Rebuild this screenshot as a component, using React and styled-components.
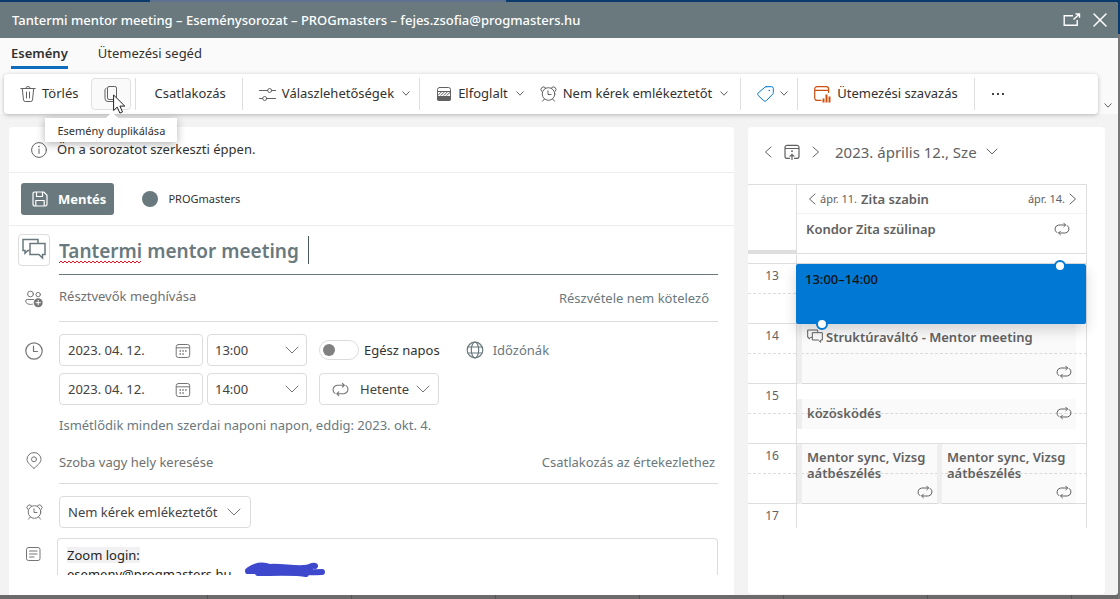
import React from "react";
import styled, { createGlobalStyle, css } from "styled-components";

const GlobalStyle = createGlobalStyle`
  *, *::before, *::after { box-sizing: border-box; }
  body {
    margin: 0;
    font-family: "Noto Sans", "Open Sans", sans-serif;
    font-size: 13px;
    line-height: 20px;
    color: #323130;
  }
  button, input, select, textarea { font: inherit; color: inherit; }
  button { cursor: pointer; }
  svg { display: block; flex: none; }
`;

/* ---------- icons ---------- */

const Icon = ({ w = 16, h = w, sw = 1, children, ...rest }) => (
  <svg
    width={w}
    height={h}
    viewBox={`0 0 ${w} ${h}`}
    fill="none"
    stroke="currentColor"
    strokeWidth={sw}
    strokeLinecap="round"
    strokeLinejoin="round"
    aria-hidden="true"
    {...rest}
  >
    {children}
  </svg>
);

const TrashIcon = () => (
  <Icon>
    <path d="M.8 2.5h14.4M5.8 2.5a2.2 2 0 0 1 4.4 0M2.3 2.8l1.2 11.1a1.8 1.8 0 0 0 1.8 1.6h5.4a1.8 1.8 0 0 0 1.8-1.6l1.2-11.1M6.5 6v6M9.5 6v6" />
  </Icon>
);
const CopyIcon = () => (
  <Icon>
    <rect x="4.5" y=".5" width="9" height="13" rx="1.6" />
    <path d="M3.2 2.2c-1 .3-1.2 1-1.2 1.8v8.5a3 3 0 0 0 3 3h5c.9 0 1.6-.3 1.9-1.2" />
  </Icon>
);
const SlidersIcon = () => (
  <Icon w={17} h={16}>
    <path d="M.5 4.5h8M13 4.5h3.5M.5 12.5h3M8 12.5h8.5" />
    <circle cx="10.7" cy="4.5" r="2" />
    <circle cx="5.7" cy="12.5" r="2" />
  </Icon>
);
const BusyIcon = () => (
  <Icon>
    <rect x="1.5" y="1.5" width="13" height="13" rx="2" />
    <path d="M1 10h14v3a2 2 0 0 1-2 2H3a2 2 0 0 1-2-2z" fill="currentColor" stroke="none" />
    <path d="M1.5 5.5h13M2 9.3l3-3M5 9.3l3-3M8 9.3l3-3M11 9.3l3-3" />
  </Icon>
);
const AlarmIcon = () => (
  <Icon w={17} h={16}>
    <circle cx="8.5" cy="8" r="6.3" />
    <path d="M8 4.8v3.7h3M4.2 13.2l-1.7 2M12.8 13.2l1.7 2M1.6 5.3A2.6 2.6 0 1 1 5.6 1.8M15.4 5.3a2.6 2.6 0 1 0-4-3.5" />
  </Icon>
);
const TagIcon = () => (
  <Icon w={17} h={16} stroke="#0078d4">
    <path d="M9.2.7h5.3a1.8 1.8 0 0 1 1.8 1.8v4.2c0 .6-.2 1-.6 1.4l-6.4 6.6a1.8 1.8 0 0 1-2.6 0L1.2 9.5a1.8 1.8 0 0 1 0-2.6L7.9 1.2C8.3.9 8.7.7 9.2.7z" />
    <circle cx="12.3" cy="4.5" r=".8" fill="#0078d4" stroke="none" />
  </Icon>
);
const PollIcon = () => (
  <Icon w={17} h={17} sw={1.2} stroke="#ca5010">
    <path d="M7 14.4H3A2.3 2.3 0 0 1 .7 12.1V3A2.3 2.3 0 0 1 3 .7h9.3A2.3 2.3 0 0 1 14.6 3v3.5M.7 4.4h13.9" />
    <path d="M9.5 12.5v4M12.5 8.5v8M15.5 10.5v6" strokeWidth="2" strokeLinecap="butt" />
  </Icon>
);
const chevrons = {
  8: "M.8 .8L4 4.2 7.2 .8",
  12: "M1 1l5 5 5-5",
  14: "M1 1l6 6 6-6",
};
const ChevronDown = ({ w = 8 }) => (
  <Icon w={w} h={w > 10 ? 8 : 6}>
    <path d={chevrons[w]} />
  </Icon>
);
const ChevronLeft = () => (
  <Icon w={8} h={12}>
    <path d="M7 1L1.5 6 7 11" />
  </Icon>
);
const ChevronRight = () => (
  <Icon w={8} h={12}>
    <path d="M1 1l5.5 5L1 11" />
  </Icon>
);
const PopOutIcon = () => (
  <Icon w={18} h={14} sw={1.4}>
    <path d="M10 2.7H1.2v9.6h13V7M10.5 6.5L16 1.5M12.5 1h4v3.8" strokeLinejoin="miter" strokeLinecap="butt" />
  </Icon>
);
const CloseIcon = () => (
  <Icon w={14} h={14} sw={1.5}>
    <path d="M1 1l12 12M13 1L1 13" />
  </Icon>
);
const InfoIcon = () => (
  <Icon>
    <circle cx="8" cy="8" r="7.4" />
    <path d="M8 7v4.5" />
    <circle cx="8" cy="4.6" r=".8" fill="currentColor" stroke="none" />
  </Icon>
);
const SaveIcon = () => (
  <Icon sw={1.2}>
    <path d="M2.7 1h9l3.3 3.2v9.1a1.7 1.7 0 0 1-1.7 1.7H2.7A1.7 1.7 0 0 1 1 13.3V2.7A1.7 1.7 0 0 1 2.7 1zM4.5 1v4.5h6V1M3.8 15V9.5h8.4V15" />
  </Icon>
);
const ChatsIcon = ({ size = 24, sw = 1.5 }) => (
  <svg
    width={size}
    height={size}
    viewBox="0 0 24 24"
    fill="none"
    stroke="currentColor"
    strokeWidth={sw}
    aria-hidden="true"
  >
    <path d="M7.5 12.5H5.8L3 15.2v-2.7H1V1.5h15V5" />
    <path d="M8 5.5h15v11h-2.5v3.5l-3.6-3.5H8z" />
  </svg>
);
const PeopleIcon = () => (
  <Icon w={18} h={18}>
    <circle cx="5.5" cy="4" r="2.9" />
    <circle cx="13.2" cy="4.6" r="2.2" />
    <path d="M8.5 9.5H2.3A1.6 1.6 0 0 0 .7 11.1c0 2.2 2.5 3.3 4.8 3.3.7 0 1.4 0 2-.2" />
    <circle cx="13.2" cy="12.7" r="4.5" fill="currentColor" stroke="none" />
    <path d="M13.2 10.5v4.4M11 12.7h4.4" stroke="#fff" />
  </Icon>
);
const ClockIcon = () => (
  <Icon w={18} h={18} sw={1.2}>
    <circle cx="9" cy="9" r="8.2" />
    <path d="M8.5 4v5.5h4" />
  </Icon>
);
const PinIcon = () => (
  <Icon w={16} h={17}>
    <path d="M8 16.3C6 14.6 1 11 1 7.3a7 6.700 0 0 1 14 0C15 11 10 14.6 8 16.3z" />
    <circle cx="8" cy="7.3" r="2.5" />
  </Icon>
);
const NoteIcon = () => (
  <Icon>
    <rect x="1.5" y="1.5" width="13.5" height="13" rx="2" />
    <path d="M4.5 5h7.5M4.5 8h7.5M4.5 11h4.5" />
  </Icon>
);
const CalendarIcon = () => (
  <Icon>
    <rect x="1.2" y="1.5" width="13.5" height="13" rx="2.2" />
    <path d="M1.5 4.8h13" />
    <path d="M4.5 8h1.5M7.3 8h1.5M10.1 8h1.5M4.5 11h1.5M7.3 11h1.5" strokeWidth="1.6" strokeLinecap="butt" />
  </Icon>
);
const TodayIcon = () => (
  <Icon w={16} h={16} sw={1.2}>
    <path d="M5.5 14.4H3.2A2.2 2.2 0 0 1 1 12.2V3.5a2.2 2.2 0 0 1 2.2-2.2h9.6A2.2 2.2 0 0 1 15 3.5v8.7a2.2 2.2 0 0 1-2.2 2.2h-2.3M1 4.5h14M8 15.6V10M6 12.200L8 10.800l2 1.400" />
    <circle cx="8" cy="7.2" r=".9" fill="currentColor" stroke="none" />
  </Icon>
);
const RepeatIcon = ({ w = 16 }) => (
  <svg
    width={w}
    height={w}
    viewBox="0 0 16 16"
    fill="none"
    stroke="currentColor"
    strokeLinecap="round"
    strokeLinejoin="round"
    aria-hidden="true"
  >
    <path d="M2.8 11.6A4.2 4.2 0 0 1 4.7 4h6.8M9.8 2.2L11.600 4 9.8 5.8M13.2 4.4A4.2 4.2 0 0 1 11.3 12H4.7M6.4 10.2L4.6 12l1.800 1.800" />
  </svg>
);
const GlobeIcon = () => (
  <Icon w={18} h={18} sw={1.2}>
    <circle cx="9" cy="9" r="7.8" />
    <ellipse cx="9" cy="9" rx="3.7" ry="7.8" />
    <path d="M2 6h14M2 12h14" />
  </Icon>
);

/* ---------- window ---------- */

const Backdrop = styled.div`
  display: flex;
  flex-direction: column;
  height: 100vh;
  min-height: 580px;
  padding: 2px 2px 0 0;
  background:
    linear-gradient(#5f7290, #5f7290) 150px 0 / 356px 2px no-repeat,
    linear-gradient(#0a3a6b, #0a3a6b) 0 0 / 100% 34px no-repeat,
    #777;
`;
const Window = styled.div`
  display: flex;
  flex: 1;
  flex-direction: column;
  min-height: 0;
  border-radius: 0 3px 3px 0;
  overflow: hidden;
  background: #f3f3f3;
`;
const PageBehind = styled.div`
  height: 4px;
  background: repeating-linear-gradient(90deg, #6c6a6a 0 143px, #565454 143px 144px);
  background-position: 64px 0;
`;
const TitleBar = styled.header`
  display: flex;
  align-items: center;
  height: 36px;
  padding: 0 11px 0 12px;
  background: #69797e;
  color: #fff;
`;
const TitleText = styled.h1`
  flex: 1;
  margin: 0;
  font-size: 13px;
  font-weight: 500;
`;
const TitleButton = styled.button`
  display: flex;
  padding: 0;
  margin-left: 12px;
  border: 0;
  background: none;
`;
const Ribbon = styled.div`
  display: grid;
  grid-template-columns: 1fr 20px;
  background: #fafafa;
`;
const Tabs = styled.nav`
  display: flex;
  grid-column: 1 / -1;
  gap: 30px;
  height: 36px;
  padding: 5px 11px 0;
`;
const Tab = styled.a`
  height: 26px;
  color: #323130;
  text-decoration: none;
  ${(p) =>
    p.$active &&
    css`
      font-weight: 600;
      border-bottom: 3px solid #0f6cbd;
    `}
`;
const Toolbar = styled.div`
  display: flex;
  height: 40px;
  margin-left: 4px;
  padding: 4px 0 4px 4px;
  border-radius: 4px;
  background: #fff;
  box-shadow: 0 1px 4px rgba(0, 0, 0, 0.26);
  position: relative;
  z-index: 2;
`;
const ToolGroup = styled.div`
  display: flex;
  align-items: center;
  padding: 0 ${(p) => p.$end ?? 0}px 0 ${(p) => p.$start ?? 0}px;
  border-right: 1px solid #dedede;
  &:last-child { border-right: 0; }
`;
const ToolButton = styled.button`
  display: flex;
  align-items: center;
  gap: 6px;
  height: 32px;
  padding: 0 8px;
  border: 0;
  border-radius: 4px;
  background: none;
  color: #616161;
  white-space: nowrap;
`;
const ToolLabel = styled.span`
  padding: 0 ${(p) => (p.$menu ? 2 : 0)}px 2px 0;
  color: #323130;
`;
const HoveredTool = styled.div`
  position: relative;
  margin: 0 4px 0 5px;
  color: #616161;
`;
const HoveredButton = styled(ToolButton)`
  width: 40px;
  justify-content: center;
  border: 1px solid #e0e0e0;
  background: #fafafa;
`;
const Tooltip = styled.div`
  position: absolute;
  top: 40px;
  left: -46px;
  padding: 3px 12px 1px;
  background: #fff;
  box-shadow: 0 2px 8px rgba(0, 0, 0, 0.3);
  color: #323130;
  font-size: 11px;
  white-space: nowrap;
  &::before {
    content: "";
    position: absolute;
    top: -6px;
    left: 60px;
    border: 7px solid transparent;
    border-top-width: 0;
    border-bottom-color: #fff;
  }
`;
const Pointer = styled.svg`
  position: absolute;
  top: 16px;
  left: 22px;
`;
const CollapseButton = styled.button`
  display: flex;
  align-items: flex-end;
  justify-content: center;
  padding: 0 0 5px;
  border: 0;
  background: none;
  color: #616161;
`;
const Body = styled.main`
  display: grid;
  grid-template-columns: minmax(0, 1fr) 357px;
  flex: 1;
  gap: 14px;
  min-height: 0;
  padding: 13px 13px 0 9px;
`;

/* ---------- form ---------- */

const FormCard = styled.form`
  display: flex;
  flex-direction: column;
  min-height: 0;
  padding-bottom: 20px;
  border-radius: 4px 4px 0 0;
  background: #fff;
`;
const InfoBar = styled.div`
  display: flex;
  align-items: center;
  gap: 10px;
  height: 46px;
  padding-left: 22px;
  border-bottom: 1px solid #ededed;
  color: #616161;
  p {
    margin: 0;
    padding-bottom: 2px;
    color: #323130;
  }
`;
const ActionBar = styled.div`
  display: flex;
  align-items: center;
  gap: 28px;
  height: 53px;
  padding-left: 12px;
  border-bottom: 1px solid #ededed;
`;
const SaveButton = styled.button`
  display: flex;
  align-items: center;
  gap: 10px;
  height: 32px;
  padding: 0 8px 0 11px;
  border: 0;
  border-radius: 3px;
  background: #69797e;
  color: #fff;
  font-weight: 700;
`;
const CalendarName = styled.button`
  display: flex;
  align-items: center;
  gap: 10px;
  padding: 0;
  border: 0;
  background: none;
  font-size: 11px;
  &::before {
    content: "";
    width: 16px;
    height: 16px;
    border-radius: 50%;
    background: #69797e;
  }
`;
const FieldRow = styled.div`
  display: grid;
  grid-template-columns: 50px minmax(0, 1fr);
  flex: none;
  margin-top: ${(p) => p.$top ?? 0}px;
  padding-right: 16px;
`;
const IconCell = styled.div`
  display: flex;
  justify-content: center;
  align-items: flex-start;
  padding-top: ${(p) => p.$top ?? 0}px;
  color: #757575;
`;
const CharmButton = styled.button`
  display: flex;
  align-items: center;
  justify-content: center;
  width: 32px;
  height: 32px;
  padding: 0;
  border: 1px solid #dcdcdc;
  border-radius: 4px;
  background: #fff;
  color: #69797e;
`;
const TitleField = styled.div`
  position: relative;
  height: 41px;
  border-bottom: 1px solid #69797e;
`;
const TitleInput = styled.input`
  width: 100%;
  height: 34px;
  padding: 0;
  border: 0;
  outline: 0;
  background: none;
  color: #69797e;
  font-size: 19px;
  font-weight: 600;
`;
const Squiggle = styled.svg`
  position: absolute;
  left: 0;
  top: 26px;
`;
const Caret = styled.span`
  position: absolute;
  left: 249px;
  top: 2px;
  width: 1px;
  height: 28px;
  background: #4c5a5f;
`;
const LineField = styled.div`
  display: flex;
  justify-content: space-between;
  align-items: flex-start;
  height: ${(p) => p.$h}px;
  padding-right: ${(p) => p.$end}px;
  border-bottom: 1px solid #dcdcdc;
`;
const BareInput = styled.input`
  flex: 1;
  min-width: 0;
  padding: 0;
  border: 0;
  outline: 0;
  background: none;
  &::placeholder { color: #707070; opacity: 1; }
`;
const TextButton = styled.button`
  display: flex;
  align-items: center;
  gap: 9px;
  padding: ${(p) => (p.$drop ? 2 : 0)}px 0 0;
  border: 0;
  background: none;
  color: #69797e;
`;
const TimeLine = styled.div`
  display: flex;
  align-items: center;
  height: 32px;
  margin-bottom: 7px;
`;
const Box = styled.div`
  display: flex;
  align-items: center;
  position: relative;
  height: 32px;
  width: ${(p) => p.$w}px;
  margin-right: ${(p) => p.$gap ?? 0}px;
  border: 1px solid #dcdcdc;
  border-radius: 4px;
  background: #fff;
  color: #757575;
`;
const DateInput = styled.input`
  width: 100%;
  height: 30px;
  padding: 0 0 0 8px;
  border: 0;
  outline: 0;
  background: none;
  color: #424242;
`;
const DateButton = styled.button`
  display: flex;
  padding: 2px 0 0;
  margin-right: 11px;
  border: 0;
  background: none;
  color: #757575;
`;
const Select = styled.select`
  width: 100%;
  height: 30px;
  padding: 0 0 0 ${(p) => p.$start ?? 7}px;
  border: 0;
  outline: 0;
  appearance: none;
  background: none;
  color: #424242;
`;
const SelectIcon = styled.span`
  position: absolute;
  pointer-events: none;
  ${(p) => (p.$side === "left" ? "left: 12px;" : `right: ${p.$inset ?? 7}px;`)}
`;
const AllDay = styled.label`
  display: flex;
  align-items: center;
  gap: 5px;
  margin-right: 26px;
`;
const Switch = styled.input`
  appearance: none;
  display: flex;
  align-items: center;
  width: 40px;
  height: 20px;
  margin: 0;
  padding: 3px;
  border: 1px solid #dcdcdc;
  border-radius: 10px;
  &::before {
    content: "";
    width: 12px;
    height: 12px;
    border-radius: 50%;
    background: #808080;
  }
`;
const Recurrence = styled.p`
  margin: 10px 0 0;
  color: #69797e;
`;
const NotesRow = styled(FieldRow)`
  grid-template-columns: 48px minmax(0, 1fr);
  flex: 1 1 37px;
  min-height: 0;
`;
const NotesField = styled.div`
  position: relative;
  display: flex;
  min-height: 0;
`;
const Notes = styled.textarea`
  display: block;
  width: 100%;
  height: 100%;
  min-height: 0;
  padding: 7px 9px 0;
  border: 1px solid #dcdcdc;
  border-bottom: 0;
  border-radius: 4px 4px 0 0;
  outline: 0;
  overflow: hidden;
  resize: none;
  color: #242424;
  line-height: 19px;
  background: linear-gradient(#f1f1f4, #f1f1f4) 9px 8px / 73px 16px no-repeat;
`;
const Scribble = styled.svg`
  position: absolute;
  left: 187px;
  top: 24px;
`;

/* ---------- day view ---------- */

const DayCard = styled.aside`
  display: flex;
  flex-direction: column;
  margin-bottom: 1px;
  border-radius: 4px;
  background: #fff;
  color: #616161;
`;
const DayNav = styled.div`
  display: flex;
  align-items: center;
  height: 57px;
  padding: 0 0 7px 16px;
`;
const NavButton = styled.button`
  display: flex;
  align-items: center;
  gap: 9px;
  padding: 0;
  margin-right: ${(p) => p.$gap ?? 0}px;
  border: 0;
  background: none;
  color: #616161;
  font-size: 15px;
`;
const Calendar = styled.div`
  display: grid;
  grid-template-columns: 48px 1fr;
  margin-right: 18px;
  border-top: 1px solid #dedede;
`;
const AllDayGutter = styled.div`
  border-bottom: 4px solid #dedede;
  height: 69px;
`;
const AllDayArea = styled.div`
  border: solid #dedede;
  border-width: 0 1px 1px;
`;
const SpanRow = styled.div`
  display: flex;
  align-items: center;
  gap: 4px;
  height: 29px;
  padding: 0 9px 0 11px;
  border-bottom: 1px solid #f3f3f3;
  font-size: 11px;
  strong { flex: 1; font-size: 13px; font-weight: 600; }
`;
const AllDayEvent = styled.div`
  display: flex;
  align-items: center;
  justify-content: space-between;
  height: 30px;
  margin-bottom: 1px;
  padding: 0 16px 0 9px;
  font-weight: 600;
`;
const Hours = styled.div`
  display: grid;
  grid-template-columns: 48px minmax(0, 1fr);
  grid-template-rows: 9px repeat(8, 30px) 25px;
  grid-column: 1 / -1;
`;
const HourLabel = styled.div`
  grid-column: 1;
  grid-row: ${(p) => p.$row};
  padding-top: 2px;
  text-align: center;
  font-size: 12px;
  border-top: 1px solid #dedede;
`;
const Slot = styled.div`
  grid-column: ${(p) => p.$col};
  grid-row: ${(p) => p.$row};
  border-top: 1px ${(p) => (p.$half ? "dashed" : "solid")} #dedede;
  ${(p) => p.$first && "border-top-color: transparent;"}
  ${(p) =>
    p.$col === 2 &&
    css`
      border-left: 1px solid #dedede;
      border-right: 1px solid #dedede;
    `}
`;
const Events = styled.div`
  display: grid;
  grid-column: 2;
  grid-row: 2 / -1;
  grid-template-columns: 140px minmax(0, 1fr) 10px;
  grid-template-rows: repeat(16, 15px);
  padding: 1px 0 0 1px;
  margin-right: 1px;
`;
const Event = styled.div`
  display: flex;
  flex-direction: column;
  justify-content: space-between;
  grid-column: ${(p) => p.$col};
  grid-row: ${(p) => p.$rows};
  padding: 5px 4px 4px 5px;
  border-left: 5px solid #eeeeee;
  border-radius: 2px;
  background: rgba(0, 0, 0, 0.02);
  line-height: 16px;
  font-weight: 600;
  ${(p) =>
    p.$short &&
    css`
      flex-direction: row;
      align-items: center;
      padding-bottom: 7px;
    `}
`;
const EventTitle = styled.span`
  display: flex;
  gap: 3px;
  padding-right: 4px;
  word-break: break-all;
`;
const EventIcon = styled.span`
  align-self: ${(p) => (p.$inline ? "center" : "flex-end")};
`;
const Selected = styled.div`
  grid-column: 1 / -1;
  grid-row: 1 / 5;
  position: relative;
  z-index: 1;
  margin-left: -1px;
  padding: 5px 9px;
  border-radius: 2px;
  background: #0078d4;
  box-shadow: 0 6px 14px rgba(0, 0, 0, 0.16);
  color: #111;
  font-weight: 500;
`;
const Handle = styled.span`
  position: absolute;
  width: 12px;
  height: 12px;
  border: 2px solid #0078d4;
  border-radius: 50%;
  background: #fff;
  ${(p) => (p.$end ? "bottom: -6px; left: 20px;" : "top: -4px; right: 20px;")}
`;

const half = Array.from({ length: 9 }, (_, i) => i + 2);

const ToolMenu = ({ icon, label, children }) => (
  <ToolButton type="button" aria-label={label}>
    {icon}
    {children && <ToolLabel $menu>{children}</ToolLabel>}
    <ChevronDown />
  </ToolButton>
);

const DateBox = ({ label }) => (
  <Box $w={144} $gap={4}>
    <DateInput aria-label={label} defaultValue="2023. 04. 12." />
    <DateButton type="button" aria-label={label + " választása"}>
      <CalendarIcon />
    </DateButton>
  </Box>
);

const TimeBox = ({ label, value }) => (
  <Box $w={100} $gap={12}>
    <Select aria-label={label} defaultValue={value}>
      <option>{value}</option>
    </Select>
    <SelectIcon>
      <ChevronDown w={14} />
    </SelectIcon>
  </Box>
);

export default function App() {
  return (
    <>
      <GlobalStyle />
      <Backdrop>
        <Window>
          <TitleBar>
            <TitleText>
              Tantermi mentor meeting – Eseménysorozat – PROGmasters – fejes.zsofia@progmasters.hu
            </TitleText>
            <TitleButton type="button" aria-label="Megnyitás új ablakban">
              <PopOutIcon />
            </TitleButton>
            <TitleButton type="button" aria-label="Bezárás">
              <CloseIcon />
            </TitleButton>
          </TitleBar>

          <Ribbon>
            <Tabs>
              <Tab href="#esemeny" $active>Esemény</Tab>
              <Tab href="#utemezes">Ütemezési segéd</Tab>
            </Tabs>
            <Toolbar role="toolbar">
              <ToolGroup $start={4}>
                <ToolButton type="button">
                  <TrashIcon />
                  <ToolLabel>Törlés</ToolLabel>
                </ToolButton>
                <HoveredTool>
                  <HoveredButton type="button" aria-label="Esemény duplikálása">
                    <CopyIcon />
                  </HoveredButton>
                  <Tooltip role="tooltip">Esemény duplikálása</Tooltip>
                  <Pointer width="13" height="20" viewBox="0 0 13 20" aria-hidden="true">
                    <path
                      d="M.6 1v15.500l3.600-3.400 2.700 6 2.600-1.200-2.600-5.800h4.900z"
                      fill="#fff"
                      stroke="#222"
                    />
                  </Pointer>
                </HoveredTool>
              </ToolGroup>
              <ToolGroup $start={10} $end={8}>
                <ToolButton type="button">
                  <ToolLabel>Csatlakozás</ToolLabel>
                </ToolButton>
              </ToolGroup>
              <ToolGroup $start={8} $end={1}>
                <ToolMenu icon={<SlidersIcon />}>Válaszlehetőségek</ToolMenu>
              </ToolGroup>
              <ToolGroup $start={8} $end={4}>
                <ToolMenu icon={<BusyIcon />}>Elfoglalt</ToolMenu>
                <ToolMenu icon={<AlarmIcon />}>Nem kérek emlékeztetőt</ToolMenu>
              </ToolGroup>
              <ToolGroup $start={8} $end={1}>
                <ToolMenu icon={<TagIcon />} label="Kategória" />
              </ToolGroup>
              <ToolGroup $start={8} $end={8}>
                <ToolButton type="button">
                  <PollIcon />
                  <ToolLabel>Ütemezési szavazás</ToolLabel>
                </ToolButton>
              </ToolGroup>
              <ToolGroup $start={8}>
                <ToolButton type="button" aria-label="További lehetőségek">
                  <Icon w={14} h={4}>
                    <path
                      d="M1 1h2v2H1zM6 1h2v2H6zM11 1h2v2h-2z"
                      fill="#424242"
                      stroke="none"
                    />
                  </Icon>
                </ToolButton>
              </ToolGroup>
            </Toolbar>
            <CollapseButton type="button" aria-label="Menüszalag">
              <ChevronDown />
            </CollapseButton>
          </Ribbon>

          <Body>
            <FormCard>
              <InfoBar>
                <InfoIcon />
                <p>Ön a sorozatot szerkeszti éppen.</p>
              </InfoBar>
              <ActionBar>
                <SaveButton type="button">
                  <SaveIcon />
                  Mentés
                </SaveButton>
                <CalendarName type="button">PROGmasters</CalendarName>
              </ActionBar>

              <FieldRow $top={8}>
                <IconCell>
                  <CharmButton type="button" aria-label="Ikon">
                    <ChatsIcon />
                  </CharmButton>
                </IconCell>
                <TitleField>
                  <TitleInput aria-label="Cím" spellCheck={false} defaultValue="Tantermi mentor meeting " />
                  <Squiggle width="83" height="4" viewBox="0 0 83 4" aria-hidden="true">
                    <path
                      d={"M0 3" + Array.from({ length: 41 }, (_, i) => `L${i * 2 + 2} ${i % 2 ? 3 : 1}`).join("")}
                      fill="none"
                      stroke="#e81123"
                    />
                  </Squiggle>
                  <Caret />
                </TitleField>
              </FieldRow>

              <FieldRow $top={11}>
                <IconCell $top={4}>
                  <PeopleIcon />
                </IconCell>
                <LineField $h={36} $end={9}>
                  <BareInput aria-label="Résztvevők meghívása" placeholder="Résztvevők meghívása" />
                  <TextButton type="button" $drop>Részvétele nem kötelező</TextButton>
                </LineField>
              </FieldRow>

              <FieldRow $top={12}>
                <IconCell $top={8}>
                  <ClockIcon />
                </IconCell>
                <div>
                  <TimeLine>
                    <DateBox label="Kezdés dátuma" />
                    <TimeBox label="Kezdés ideje" value="13:00" />
                    <AllDay>
                      <Switch type="checkbox" role="switch" />
                      Egész napos
                    </AllDay>
                    <TextButton type="button">
                      <GlobeIcon />
                      Időzónák
                    </TextButton>
                  </TimeLine>
                  <TimeLine>
                    <DateBox label="Befejezés dátuma" />
                    <TimeBox label="Befejezés ideje" value="14:00" />
                    <Box $w={120}>
                      <SelectIcon $side="left">
                        <RepeatIcon w={17} />
                      </SelectIcon>
                      <Select aria-label="Ismétlődés" $start={40}>
                        <option>Hetente</option>
                      </Select>
                      <SelectIcon $inset={8}>
                        <ChevronDown w={14} />
                      </SelectIcon>
                    </Box>
                  </TimeLine>
                  <Recurrence>
                    Ismétlődik minden szerdai naponi napon, eddig: 2023. okt. 4.
                  </Recurrence>
                </div>
              </FieldRow>

              <FieldRow $top={17}>
                <IconCell>
                  <PinIcon />
                </IconCell>
                <LineField $h={32} $end={3}>
                  <BareInput aria-label="Szoba vagy hely keresése" placeholder="Szoba vagy hely keresése" />
                  <TextButton type="button">Csatlakozás az értekezlethez</TextButton>
                </LineField>
              </FieldRow>

              <FieldRow $top={12}>
                <IconCell $top={8}>
                  <AlarmIcon />
                </IconCell>
                <Box $w={192}>
                  <Select aria-label="Emlékeztető" $start={8}>
                    <option>Nem kérek emlékeztetőt</option>
                  </Select>
                  <SelectIcon $inset={9}>
                    <ChevronDown w={14} />
                  </SelectIcon>
                </Box>
              </FieldRow>

              <NotesRow $top={10}>
                <IconCell $top={8}>
                  <NoteIcon />
                </IconCell>
                <NotesField>
                  <Notes
                    aria-label="Leírás"
                    spellCheck={false}
                    defaultValue={"Zoom login:\nesemeny@progmasters.hu"}
                  />
                  <Scribble width="82" height="17" viewBox="0 0 82 17" aria-hidden="true">
                    <path
                      d="M5 8C12 3 20 3 26 5c10-1 24 2 34 1 6 0 7-3 11-2M4 9c20-1 40 2 74 1M14 11c14 0 40-1 48 1M14 6c10 0 30 4 52 2"
                      fill="none"
                      stroke="#3d48cc"
                      strokeWidth="6"
                      strokeLinecap="round"
                    />
                  </Scribble>
                </NotesField>
              </NotesRow>
            </FormCard>

            <DayCard>
              <DayNav>
                <NavButton type="button" aria-label="Előző nap" $gap={12}>
                  <ChevronLeft />
                </NavButton>
                <NavButton type="button" aria-label="Ma" $gap={12}>
                  <TodayIcon />
                </NavButton>
                <NavButton type="button" aria-label="Következő nap" $gap={15}>
                  <ChevronRight />
                </NavButton>
                <NavButton type="button">
                  2023. április 12., Sze
                  <ChevronDown w={12} />
                </NavButton>
              </DayNav>

              <Calendar>
                <AllDayGutter />
                <AllDayArea>
                  <SpanRow>
                    <ChevronLeft />
                    <span>ápr. 11.</span>
                    <strong>Zita szabin</strong>
                    <span>ápr. 14.</span>
                    <ChevronRight />
                  </SpanRow>
                  <AllDayEvent>
                    Kondor Zita szülinap
                    <RepeatIcon />
                  </AllDayEvent>
                </AllDayArea>
                <Hours>
                  <Slot $col={2} $row={1} $first />
                  {half.map((row) => (
                    <React.Fragment key={row}>
                      {row % 2 === 0 ? (
                        <HourLabel $row={row}>{12 + row / 2}</HourLabel>
                      ) : (
                        <Slot $col={1} $row={row} $half />
                      )}
                      <Slot $col={2} $row={row} $half={row % 2 === 1} />
                    </React.Fragment>
                  ))}
                  <Events>
                    <Selected>
                      13:00–14:00
                      <Handle />
                      <Handle $end />
                    </Selected>
                    <Event $col="1 / 3" $rows="5 / 9">
                      <EventTitle>
                        <ChatsIcon size={16} sw={1.5} />
                        Struktúraváltó - Mentor meeting
                      </EventTitle>
                      <EventIcon><RepeatIcon /></EventIcon>
                    </Event>
                    <Event $col="1 / 3" $rows="10 / 12" $short>
                      <EventTitle>közösködés</EventTitle>
                      <EventIcon $inline><RepeatIcon /></EventIcon>
                    </Event>
                    <Event $col="1" $rows="13 / 17">
                      <EventTitle>Mentor sync, Vizsgaátbészélés</EventTitle>
                      <EventIcon><RepeatIcon /></EventIcon>
                    </Event>
                    <Event $col="2" $rows="13 / 17">
                      <EventTitle>Mentor sync, Vizsgaátbészélés</EventTitle>
                      <EventIcon><RepeatIcon /></EventIcon>
                    </Event>
                  </Events>
                </Hours>
              </Calendar>
            </DayCard>
          </Body>
        </Window>
        <PageBehind />
      </Backdrop>
    </>
  );
}
